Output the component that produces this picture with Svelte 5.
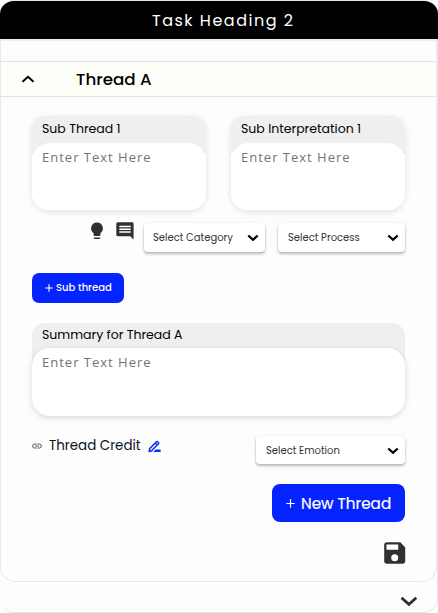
<script>
  const subs = ['Sub Thread 1', 'Sub Interpretation 1'];
  let open = $state(true);
</script>

{#snippet arrow()}
  <svg class="arrow" width="12" height="8" viewBox="0 0 12 8"><path d="M1.3 1.5 L6 5.8 L10.7 1.5" fill="none" stroke="#000" stroke-width="2.3" /></svg>
{/snippet}

<div class="task">
  <header><span class="heading">Task Heading 2</span></header>
  <section class="body">
    <button class="band" onclick={() => (open = !open)}>
      <svg width="14" height="9" viewBox="0 0 14 9"><path d="M1.5 6.700 L7 1.700 L12.5 6.700" fill="none" stroke="#000" stroke-width="1.900" /></svg>
      <span class="title">Thread A</span>
    </button>
    <div class="content">
      <div class="pair">
        {#each subs as label, i}
          <div class="field">
            <label for="sub{i}" class="label">{label}</label>
            <textarea id="sub{i}" placeholder="Enter Text Here"></textarea>
          </div>
        {/each}
      </div>
      <div class="tools">
        <svg class="bulb" width="14" height="18" viewBox="0 0 14 18" fill="#303030"><path d="M7 .5a5.900 5.900 0 0 0-3.400 10.700v1.900c0 .5.4.9.9.9h5c.5 0 .9-.4.9-.9v-1.900A5.900 5.900 0 0 0 7 .5zM3.800 15.400h6.400v.7c0 .6-.4 1-.9 1H4.700c-.5 0-.9-.4-.9-1z" /></svg>
        <svg class="note" width="18" height="18" viewBox="0 0 18 18"><path d="M2 .3h14c1 0 1.600.7 1.600 1.600v15.700l-3.400-3.400H2c-1 0-1.700-.7-1.700-1.600V1.900C.3 1 1 .3 2 .3z" fill="#303030" /><path d="M3.300 4.500h11.400M3.300 7.300h11.400M3.300 10.100h11.400" stroke="#fff" stroke-width="1.500" /></svg>
        <button class="select category"><span>Select Category</span>{@render arrow()}</button>
        <button class="select process"><span>Select Process</span>{@render arrow()}</button>
      </div>
      <button class="blue small"><svg width="8" height="8" viewBox="0 0 8 8"><path d="M4 .2v7.600M.2 4h7.600" stroke="#fff" stroke-width="1.100" /></svg><span>Sub thread</span></button>
      <div class="field summary">
        <label for="summary" class="label">Summary for Thread A</label>
        <textarea id="summary" placeholder="Enter Text Here"></textarea>
      </div>
      <div class="credit">
        <svg width="10" height="6" viewBox="0 0 10 6"><path d="M4.500 1H2.600a2 2 0 0 0 0 4h1.900M5.500 1h1.900a2 2 0 0 1 0 4H5.500M3 3h4" fill="none" stroke="#444" stroke-width=".9" /></svg>
        <span class="name">Thread Credit</span>
        <svg class="pen" width="13" height="13" viewBox="0 0 13 13"><path d="M1.200 11.300l.4-2.700 6.900-6.900c.4-.4.8-.4 1.200 0l.8.8c.4.4.4.8 0 1.200L3.700 10.600zM7.200 3l2 2M1.200 11.500l3-.8" fill="none" stroke="#0a2cf5" stroke-width="1.500" /><path d="M7.600 9.500h5v2.400H5.300z" fill="#0a2cf5" /></svg>
        <button class="select emotion"><span>Select Emotion</span>{@render arrow()}</button>
      </div>
      <button class="blue large"><svg width="9" height="9" viewBox="0 0 9 9"><path d="M4.500.3v8.400M.3 4.500h8.400" stroke="#fff" stroke-width="1.200" /></svg><span>New Thread</span></button>
      <svg class="save" width="22" height="22" viewBox="0 0 22 22"><path d="M2.800.2h13.600l4.800 5.200v13.900c0 1.500-1 2.500-2.400 2.500H2.800C1.300 21.800.2 20.800.2 19.300V2.700C.2 1.200 1.300.2 2.800.2z" fill="#303030" /><path d="M2.500 2.500h11.700v5.300H2.500z" fill="#fff" /><circle cx="10.700" cy="15.800" r="3.500" fill="#fff" /></svg>
    </div>
  </section>
  <footer><svg width="18" height="11" viewBox="0 0 18 11"><path d="M1.500 1.700 L8.900 8.300 L16.300 1.700" fill="none" stroke="#303030" stroke-width="2.800" /></svg></footer>
</div>

<style>
  :global(body) { background: #fff; }
  .task { box-sizing: border-box; width: 438px; height: 613px; border: 1px solid #e6e6e6; border-left-width: 0; border-right-width: 0; border-radius: 14px; overflow: hidden; background: #fdfdfd; box-shadow: inset -1px 0 #e8e8e8; font-family: Poppins, Inter, sans-serif; color: #000; display: flex; flex-direction: column; }
  button { font-family: inherit; margin: 0; cursor: pointer; }
  span, label { white-space: nowrap; }
  svg { display: block; flex: none; }
  header { height: 38px; flex: none; background: #000; color: #fff; display: flex; padding-left: 152px; align-items: center; font-size: 16px; letter-spacing: 1.500px; }
  .body { box-sizing: border-box; width: 437px; height: 543px; flex: none; border: 1px solid #e8e8e8; border-top: 2px solid #ededed; border-radius: 0 0 15px 15px; padding-top: 20px; }
  .band { box-sizing: border-box; width: 434px; height: 36px; border: solid #e2e2e2; border-width: 1px 0; background: #fdfef7; display: flex; align-items: center; padding: 0 0 0 20px; gap: 41px; color: #000; }
  .title { font-size: 16.700px; font-weight: 500; }
  .content { padding: 19px 31px 0; display: flex; flex-direction: column; }
  .pair { display: flex; justify-content: space-between; width: 373px; }
  .field { width: 174px; height: 94px; border-radius: 13px 13px 18px 18px; background: linear-gradient(#efefef 38px, #fff 38px); box-shadow: 0 2px 6px rgba(0,0,0,.12); display: flex; flex-direction: column; }
  .label { height: 27px; line-height: 25px; padding-left: 10px; font-size: 12.500px; }
  textarea { box-sizing: border-box; width: 100%; flex: 1; border: 0; border-radius: 18px 18px 16px 16px; resize: none; background: #fff; padding: 5px 10px; font: 13px/19px "Open Sans", sans-serif; letter-spacing: 1px; outline: 0; }
  textarea::placeholder { color: #6c757d; opacity: 1; }
  .tools { display: flex; margin-top: 12px; height: 31px; padding-left: 58px; }
  .note { margin-left: 12px; }
  .select { box-sizing: border-box; height: 29px; margin-top: 1px; border: 0; border-radius: 4px; background: #fff; box-shadow: 0 2px 3px rgba(0,0,0,.27), 0 0 2px rgba(0,0,0,.1); display: flex; align-items: center; justify-content: space-between; padding: 0 6px 0 10px; font-size: 10px; color: #333; }
  .category { width: 121px; margin-left: 10px; padding-left: 9px; }
  .process { width: 127px; margin-left: 13px; }
  .blue { border: 0; background: #0523ff; color: #fff; display: flex; align-items: center; }
  .small { width: 92px; height: 30px; border-radius: 7px; margin-top: 20px; padding: 0 0 0 12.500px; gap: 3.500px; font-size: 10px; font-weight: 500; }
  .summary { width: 373px; height: 93px; margin-top: 20px; background: linear-gradient(#efefef 45px, transparent 45px); box-shadow: none; }
  .summary .label { height: 25px; line-height: 24px; }
  .summary textarea { box-shadow: 0 2px 6px rgba(0,0,0,.14); border-radius: 18px; }
  .credit { display: flex; align-items: center; margin-top: 20px; height: 28px; width: 373px; }
  .name { margin: -9px 0 0 7px; font-size: 13.400px; width: 92px; color: #0b1020; }
  .credit > svg { margin-top: -8px; }
  .credit > .pen { margin: -8px 0 0 7px; }
  .emotion { width: 149px; height: 28px; margin: 0 0 0 auto; padding-top: 1px; }
  .large { width: 133px; height: 38px; align-self: flex-end; margin-top: 20px; border-radius: 8px; padding: 0 0 0 14px; gap: 6px; font-size: 15.200px; font-weight: 400; -webkit-text-stroke: .2px #fff; }
  .save { align-self: flex-end; margin: 20px -1px 0 0; }
  footer { display: flex; justify-content: flex-end; padding: 14px 20px 0 0; }
</style>
